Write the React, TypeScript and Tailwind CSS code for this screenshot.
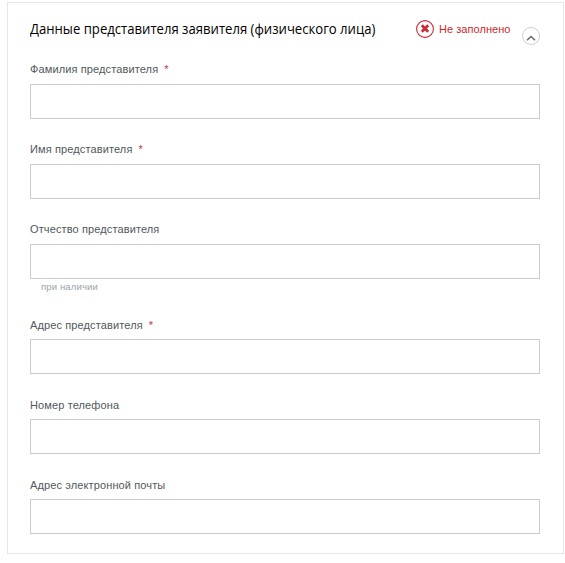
import React from 'react';

interface Field {
  id: string;
  label: string;
  required?: boolean;
  hint?: string;
}

const fields: Field[] = [
  { id: 'lastName', label: 'Фамилия представителя', required: true },
  { id: 'firstName', label: 'Имя представителя', required: true },
  { id: 'middleName', label: 'Отчество представителя', hint: 'при наличии' },
  { id: 'address', label: 'Адрес представителя', required: true },
  { id: 'phone', label: 'Номер телефона' },
  { id: 'email', label: 'Адрес электронной почты' },
];

const FormField: React.FC<{ field: Field }> = ({ field }) => (
  <div>
    <label htmlFor={field.id} className="block h-4 mb-[6.3px] text-[11px] leading-4 tracking-[0.12px] whitespace-nowrap text-[#4f585c]">
      {field.label}
      {field.required && <span className="ml-[6px] text-[#c8343f]">*</span>}
    </label>
    <input id={field.id} type="text" className="block w-full h-[35px] px-3 border border-[#cccccc] bg-white outline-none" />
    {field.hint && (
      <p className="h-[15.4px] pl-[11px] pt-px text-[9.5px] leading-[14px] tracking-[0.15px] text-[#98a3a8]">{field.hint}</p>
    )}
  </div>
);

const App: React.FC = () => {
  return (
    <div className="w-[565px] h-[563px] pt-[2px] pl-[7px] bg-white font-['Liberation_Sans',Arial,sans-serif]">
      <section className="w-[557px] h-[552px] pl-[22px] pr-[23px] border border-[#e6e6e6]">
        <header className="flex h-[58.3px] pt-4">
          <h2 className="w-[386px] h-5 text-[14px] leading-5 whitespace-nowrap origin-left scale-x-[0.937] text-black font-['Open_Sans','Noto_Sans',sans-serif]">
            Данные представителя заявителя (физического лица)
          </h2>
          <div className="flex items-center h-5 text-[11px] tracking-[0.05px] whitespace-nowrap text-[#ce1f2c]">
            <svg width="18" height="18" viewBox="0 0 18 18" fill="none" stroke="#d02a36" className="mr-[5px] shrink-0">
              <circle cx="9" cy="9" r="8.4" strokeWidth="1.1" />
              <path d="M5.8 5.3 L12.2 11.7 M12.2 5.3 L5.8 11.7" strokeWidth="2.8" />
            </svg>
            Не заполнено
          </div>
          <button type="button" className="ml-auto mt-2 h-[18px]">
            <svg width="18" height="18" viewBox="0 0 18 18" fill="none">
              <circle cx="9" cy="9" r="8.5" stroke="#cfcfcf" />
              <path d="M5 13.3 L9 9.5 L13 13.3" stroke="#666666" strokeWidth="1.5" />
            </svg>
          </button>
        </header>

        <form className="flex flex-col gap-[22.7px]">
          {fields.map((field) => (
            <FormField key={field.id} field={field} />
          ))}
        </form>
      </section>
    </div>
  );
};

export default App;
